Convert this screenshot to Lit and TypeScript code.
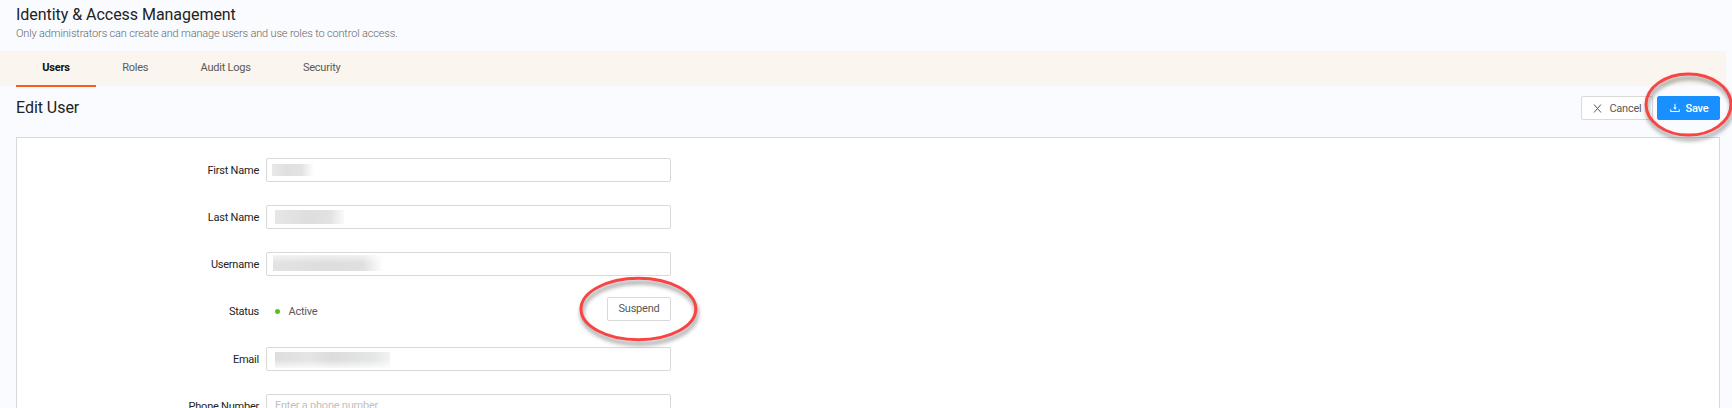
import { LitElement, html, css, svg } from "lit";
import { customElement } from "lit/decorators.js";

interface Field {
  label: string;
  kind: "masked" | "status" | "empty";
  mask?: string;
}

const FIELDS: Field[] = [
  { label: "First Name", kind: "masked", mask: "first" },
  { label: "Last Name", kind: "masked", mask: "last" },
  { label: "Username", kind: "masked", mask: "user" },
  { label: "Status", kind: "status" },
  { label: "Email", kind: "masked", mask: "email" },
  { label: "Phone Number", kind: "empty" },
];

@customElement("app-root")
export class AppRoot extends LitElement {
  static styles = css`
    :host {
      display: block;
      position: relative;
      height: 408px;
      overflow: hidden;
      background: #fafbff;
      font-family: Roboto, sans-serif;
      font-size: 11px;
      letter-spacing: -0.23px;
      color: #222;
    }
    * { box-sizing: border-box; }
    header { height: 51px; padding: 5px 16px 0; }
    h1, h2 { margin: 0; font-size: 16px; font-weight: 400; line-height: 20px; letter-spacing: -0.04px; color: #222; }
    .sub { font-size: 11px; line-height: 14px; margin-top: 2px; font-weight: 300; color: #666; letter-spacing: -0.155px; }
    nav { display: flex; height: 35px; margin-right: 6px; padding-left: 16px; background: #faf5ee; }
    .tab { height: 36px; padding: 0 26.15px; line-height: 33px; color: #595959; }
    .tab.on { width: 80px; padding: 0; text-align: center; font-weight: 700; color: #111; border-bottom: 2px solid #ff5a1c; }
    .bar { display: flex; align-items: center; height: 51px; padding: 0 12px 7px 16px; }
    .bar h2 { flex: 1; }
    .btn {
      display: flex; align-items: center; justify-content: center; height: 24px;
      border: 1px solid #d9d9d9; border-radius: 2px; background: #fff; color: #595959; font: inherit; letter-spacing: inherit; padding: 0;
    }
    .cancel { width: 72px; margin-right: 4px; gap: 7px; padding-left: 1px; }
    .save { width: 63px; gap: 6px; background: #1890ff; border-color: #1890ff; color: #fff; font-weight: 500; padding-left: 1px; }
    .card { margin: 0 12px 0 16px; height: 300px; padding-top: 20px; border: 1px solid #d9d9d9; background: #fff; }
    .row { display: flex; height: 47.15px; }
    .label { width: 242px; margin-right: 7px; text-align: right; line-height: 25px; color: #222; }
    .input { width: 405px; height: 24px; border: 1px solid #d9d9d9; border-radius: 2px; padding: 0 8px; line-height: 22px; color: #bfbfbf; }
    .mask { background: linear-gradient(90deg, #e8e8e8, #dfdfe0 35%, #e3e3e3 70%, #fff); }
    .first { width: 42px; height: 12px; margin: 5px 0 0 -3px; }
    .last { width: 69px; height: 14px; margin: 4px 0 0; background: linear-gradient(90deg, #e6e6e6, #dededf 50%, #e2e2e3 80%, #f8fafa); }
    .user { width: 110px; height: 16px; margin: 2px 0 0 -2px; background: linear-gradient(#fff9, #fff0 50%), linear-gradient(90deg, #e3e3e3, #dddddd 50%, #e0e0e1 82%, #fff); }
    .email { width: 115px; height: 16px; margin: 4px 0 0; background: linear-gradient(#fff0 50%, #fffc), linear-gradient(90deg, #dedede, #e5e5e5 30%, #dcdcdd 50%, #e5e6e6 85%, #f2f3f3); }
    .status { width: 405px; display: flex; height: 24px; align-items: center; padding-left: 9px; color: #595959; }
    .dot { width: 5px; height: 5px; border-radius: 50%; background: #52c41a; margin-right: 8.5px; margin-top: 1px; }
    .state { flex: 1; }
    .suspend { width: 64px; margin-top: -5px; }
    .marks { position: absolute; inset: 0; filter: drop-shadow(1px 4px 2px rgba(0, 0, 0, 0.45)); }
  `;

  private field(f: Field) {
    if (f.kind === "status")
      return html`<div class="status"><i class="dot"></i><span class="state">Active</span><button class="btn suspend">Suspend</button></div>`;
    if (f.kind === "empty") return html`<div class="input">Enter a phone number</div>`;
    return html`<div class="input"><div class="mask ${f.mask}"></div></div>`;
  }

  render() {
    return html`
      <header>
        <h1>Identity &amp; Access Management</h1>
        <div class="sub">Only administrators can create and manage users and use roles to control access.</div>
      </header>
      <nav>
        <div class="tab on">Users</div>
        <div class="tab">Roles</div>
        <div class="tab">Audit Logs</div>
        <div class="tab">Security</div>
      </nav>
      <div class="bar">
        <h2>Edit User</h2>
        <button class="btn cancel">
          <svg width="9" height="9" viewBox="0 0 9 9" fill="none" stroke="#595959"><path d="M1 .5 8 8.5M8 .5 1 8.5" /></svg>Cancel
        </button>
        <button class="btn save">
          <svg width="10" height="10" viewBox="0 0 10 10" fill="none" stroke="#fff"><path d="M.7 6.3V8.5H9.3V6.3M5 .8V6" /><path d="M3.3 4.6H6.7L5 6.8Z" fill="#fff" stroke="none" /></svg>Save
        </button>
      </div>
      <div class="card">
        ${FIELDS.map((f) => html`<div class="row"><div class="label">${f.label}</div>${this.field(f)}</div>`)}
      </div>
      <svg class="marks" width="1732" height="408" fill="none" stroke="#f94444" stroke-width="3">
        ${svg`<ellipse cx="1688.5" cy="104.5" rx="42.5" ry="30.6" /><ellipse cx="638.4" cy="309" rx="57.4" ry="30.8" />`}
      </svg>
    `;
  }
}
